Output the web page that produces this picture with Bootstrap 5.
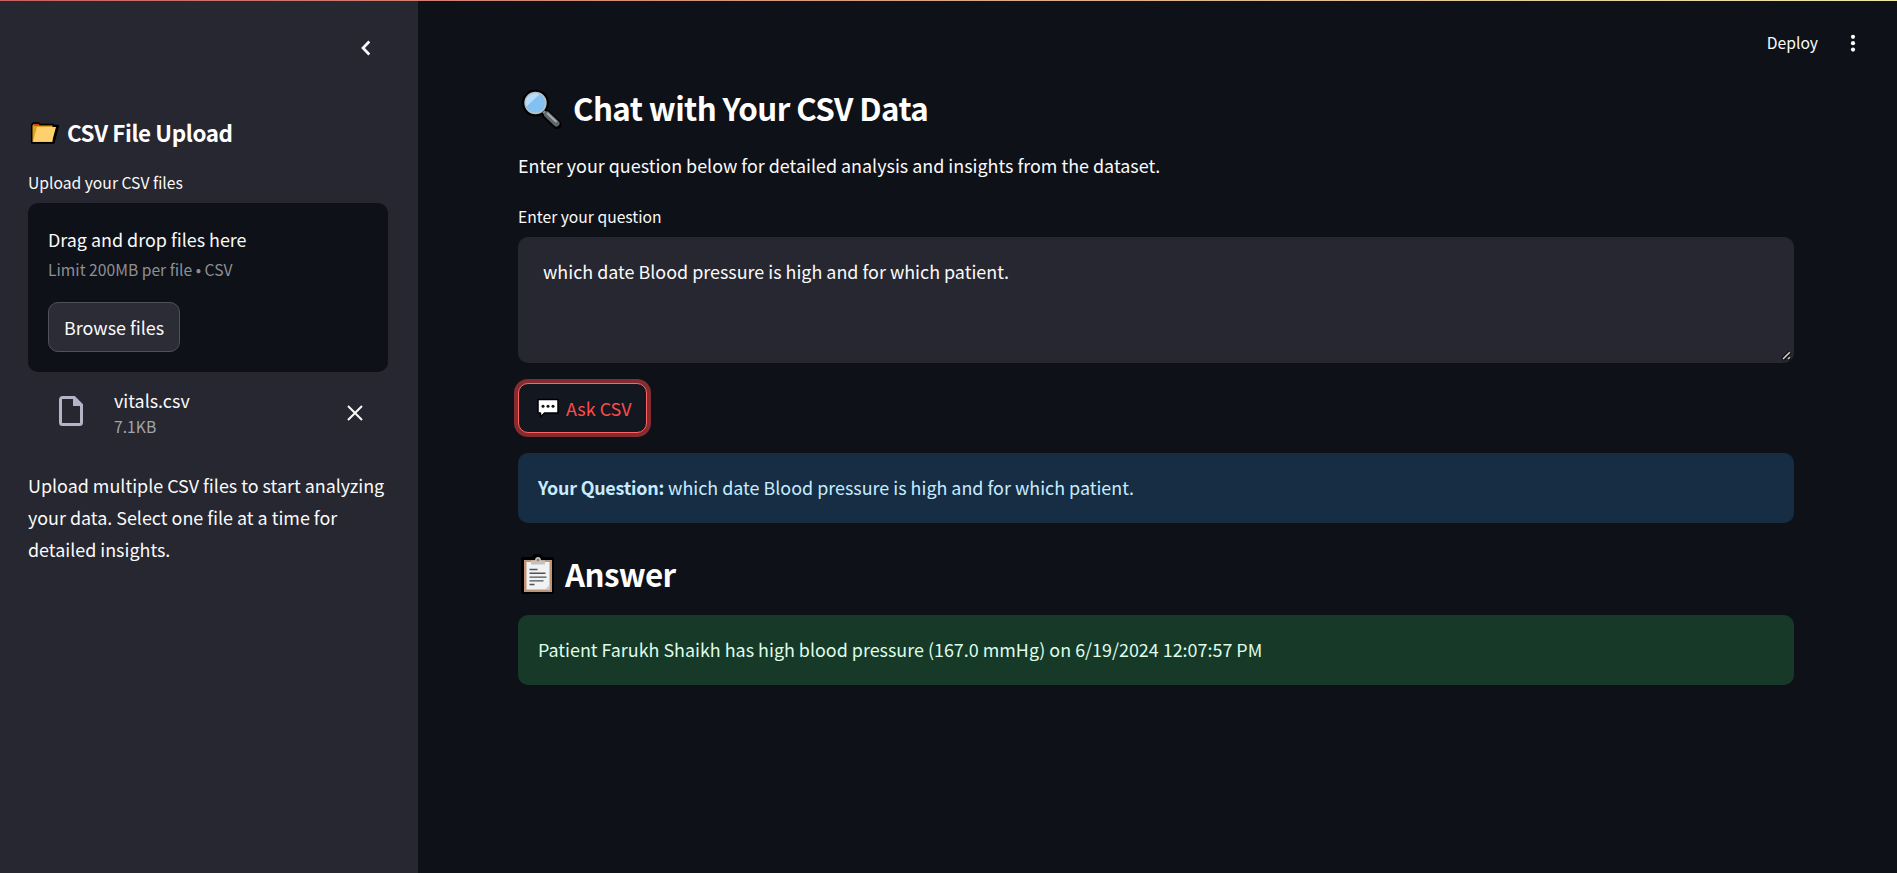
<!DOCTYPE html>
<html lang="en" data-bs-theme="dark">
<head>
<meta charset="utf-8">
<meta name="viewport" content="width=device-width, initial-scale=1">
<title>Chat with Your CSV Data</title>
<link href="https://cdn.jsdelivr.net/npm/bootstrap@5.3.0/dist/css/bootstrap.min.css" rel="stylesheet">
<style>
  body { font-family: "Noto Sans CJK JP", "Open Sans", sans-serif; font-size: 17.92px; line-height: 32px; color: #fafafa; background: #0e1117; }
  svg { display: block; flex: none; }
  strong { letter-spacing: -.24px; }
  .top-line { height: 1px; background: linear-gradient(90deg, #c96262, #eeeaa6); z-index: 5; }
  .side { width: 418px; flex: none; background: #262730; padding: 34px 30px 0 28px; }
  .collapse-icon { margin-right: 2px; }
  .side-title { font-size: 22.4px; line-height: 30px; font-weight: 600; margin: 55px 0 0; gap: 7px; letter-spacing: -.4px; }
  .side-title svg { margin-top: 3px; }
  .txt-sm { font-size: 15.68px; line-height: 26px; }
  .muted { color: #a3a4a9; }
  .side-label { margin-top: 23px; }
  .drop { height: 169px; margin-top: 7px; padding: 20px; background: #0e1117; border-radius: 10px; }
  .drop .muted { color: #8d8f93; margin-top: 2px; }
  .btn-browse { --bs-btn-padding-x: 15px; height: 50px; width: 132px; padding-block: 0; margin-top: 19px; line-height: 47px; font-size: 17.92px; color: #fafafa; background: #2b2c36; border: 1px solid #50515a; border-radius: 10px; white-space: nowrap; }
  .file-row { height: 50px; margin-top: 14px; padding: 0 23px 0 31px; }
  .file-row .remove-icon { margin-top: 3px; }
  .file-text { padding-left: 31px; padding-top: 7px; }
  .file-name { line-height: 26px; margin-top: -3px; }
  .file-size { line-height: 26px; margin-top: 1px; }
  .side-note { margin: 33px 0 0; white-space: nowrap; }
  .content { padding: 0 103px 0 100px; }
  .tools { top: 30px; right: 34px; gap: 25px; }
  .page-title { font-size: 31.3px; line-height: 42px; font-weight: 600; margin: 0; letter-spacing: -.6px; }
  .t-chat { padding-top: 86px; gap: 11px; }
  .lead-in { margin: 19px 0 0; }
  .q-label { margin-top: 23px; margin-bottom: 7px; }
  .ask-box { height: 126px; background: #262730; border: 0; border-radius: 10px; padding: 18px 25px; resize: none; color: #fafafa; font-size: 17.92px; line-height: 32px; }
  .ask-box:focus { background: #262730; box-shadow: none; }
  .grip { right: 1px; bottom: 2px; }
  .btn-ask { width: 129px; height: 50px; padding: 0 0 0 18px; margin-top: 20px; gap: 7px; line-height: 46px; font-size: 17.92px; color: #ff4b4b; background: #13171f; border: 1px solid #ff6464; border-radius: 10px; box-shadow: 0 0 0 4px #862b30; white-space: nowrap; }
  .note { height: 70px; padding: 18px 20px; border: 0; border-radius: 10px; margin: 0; }
  .note-q { background: #172d43; color: #c7ebff; margin-top: 20px; }
  .note-a { background: #173928; color: #dffde9; margin-top: 20px; }
  .t-answer { margin-top: 30px; gap: 7px; }
  .t-answer svg { margin-top: 1px; margin-bottom: -1px; }
</style>
</head>
<body>
<div class="top-line fixed-top"></div>
<div class="d-flex vh-100 overflow-hidden">
  <aside class="side d-flex flex-column">
    <div class="d-flex justify-content-end">
      <svg class="collapse-icon" width="28" height="28" viewBox="0 0 28 28" fill="none" stroke="#fafafa" stroke-width="2.7"><path d="M11.300 7.500 5 14l6.300 6.500"/></svg>
    </div>
    <h2 class="side-title d-flex align-items-center">
      <svg width="32" height="26" viewBox="0 0 32 26"><path d="M4.2 4.2 5.500 2.500h5l1.500 1.500h13V5h4.8L25.500 21.500H4.200z" stroke="#000" stroke-width="2.500" stroke-linejoin="round"/><path d="M4.500 4.500 5.500 3h5l1 1.500h13V21h-20z" fill="#e0a21c"/><path d="M5.500 2.800h5.500v2H5.500z" fill="#d63a16"/><path d="M9 6h19l-4 14.700H5z" fill="#ffd06e"/></svg>
      <span>CSV File Upload</span>
    </h2>
    <div class="side-label txt-sm">Upload your CSV files</div>
    <div class="drop">
      <div>Drag and drop files here</div>
      <div class="txt-sm muted">Limit 200MB per file • CSV</div>
      <button class="btn btn-browse">Browse files</button>
    </div>
    <div class="file-row d-flex align-items-center">
      <svg width="24" height="30" viewBox="0 0 24 30"><path d="M3.500 1.500h11.700l7.300 7.300v17.700a2 2 0 0 1-2 2h-17a2 2 0 0 1-2-2v-23a2 2 0 0 1 2-2z" fill="none" stroke="#b3b4c6" stroke-width="3"/><path d="M14 1v9h9z" fill="#b3b4c6"/></svg>
      <div class="file-text flex-grow-1">
        <div class="file-name">vitals.csv</div>
        <div class="file-size txt-sm muted">7.1KB</div>
      </div>
      <svg class="remove-icon" width="20" height="20" viewBox="0 0 20 20" stroke="#fafafa" stroke-width="2"><path d="m3 3 14 14M17 3 3 17"/></svg>
    </div>
    <p class="side-note">Upload multiple CSV files to start analyzing<br>your data. Select one file at a time for<br>detailed insights.</p>
  </aside>

  <main class="content flex-grow-1 position-relative">
    <div class="tools position-absolute d-flex align-items-center">
      <span class="txt-sm">Deploy</span>
      <svg width="20" height="20" viewBox="0 0 20 20" fill="#fafafa"><circle cx="10" cy="3.800" r="2.100"/><circle cx="10" cy="10.200" r="2.100"/><circle cx="10" cy="16.600" r="2.100"/></svg>
    </div>
    <h1 class="page-title d-flex align-items-center t-chat">
      <svg width="44" height="44" viewBox="0 0 44 44"><g fill="none" stroke="#000" stroke-linecap="round"><path d="m28 28 11 10.500" stroke-width="9"/><circle cx="17.500" cy="17" r="11" stroke-width="5"/></g><path d="m25.500 25.500 4 4" stroke="#8e979c" stroke-width="3"/><path d="m29 28.500 9.500 9" stroke="#60686c" stroke-width="6" stroke-linecap="round"/><path d="m29.500 27.500 8.500 8" stroke="#a9b0b3" stroke-width="1.800" stroke-linecap="round"/><circle cx="17.500" cy="17" r="10.300" fill="#83c1f2" stroke="#b4c1c9" stroke-width="1.800"/><path d="M8.500 20.500a9.500 9.500 0 0 1 13-12.200z" fill="#b5dcfa"/></svg>
      <span>Chat with Your CSV Data</span>
    </h1>
    <p class="lead-in">Enter your question below for detailed analysis and insights from the dataset.</p>
    <label class="txt-sm d-block q-label" for="q">Enter your question</label>
    <div class="position-relative">
      <textarea id="q" class="form-control ask-box d-block" spellcheck="false">which date Blood pressure is high and for which patient.</textarea>
      <svg class="grip position-absolute" width="12" height="12" viewBox="0 0 12 12"><path d="M1.500 10.500 9 3M7 10.500 9 8.500" stroke="#111" stroke-width="4"/><path d="M2 10 8.800 3.200M7 10 8.800 8.200" stroke="#d0d0d0" stroke-width="1.600"/></svg>
    </div>
    <button class="btn btn-ask d-flex align-items-center">
      <svg width="22" height="20" viewBox="0 0 22 20"><path d="M1 1.500h20V15H7.500L3.500 19v-4H1z" fill="#fff" stroke="#000" stroke-width="1.500" stroke-linejoin="round"/><g fill="#111"><circle cx="6" cy="8.200" r="1.500"/><circle cx="11" cy="8.200" r="1.500"/><circle cx="16" cy="8.200" r="1.500"/></g></svg>
      <span>Ask CSV</span>
    </button>
    <div class="note note-q alert"><strong>Your Question:</strong> which date Blood pressure is high and for which patient.</div>
    <h1 class="page-title d-flex align-items-center t-answer">
      <svg width="40" height="42" viewBox="0 0 40 42"><path d="M5 5h10l2-3h5l2 3h10v33H5z" stroke="#000" stroke-width="4" stroke-linejoin="round"/><path d="M6 6h28v32H6z" fill="#bd9576"/><path d="M8.500 8h23v27.500h-23z" fill="#f1f2f3"/><path d="m31.500 31-4.500 4.500h4.500z" fill="#c9ccd0"/><path d="M13 10.500V6.500h4q0-3.500 3-3.500t3 3.500h4v4z" fill="#c3c0bd"/><circle cx="20" cy="6" r="1.300" fill="#8c7768"/><path d="M11.500 15.500h8M11.500 19.300h16M11.500 23.100h17M11.500 26.900h14M11.500 30.500h5" stroke="#4f5257" stroke-width="1.400"/></svg>
      <span>Answer</span>
    </h1>
    <div class="note note-a alert">Patient Farukh Shaikh has high blood pressure (167.0 mmHg) on 6/19/2024 12:07:57 PM</div>
  </main>
</div>
<script src="https://cdn.jsdelivr.net/npm/bootstrap@5.3.0/dist/js/bootstrap.bundle.min.js"></script>
</body>
</html>
